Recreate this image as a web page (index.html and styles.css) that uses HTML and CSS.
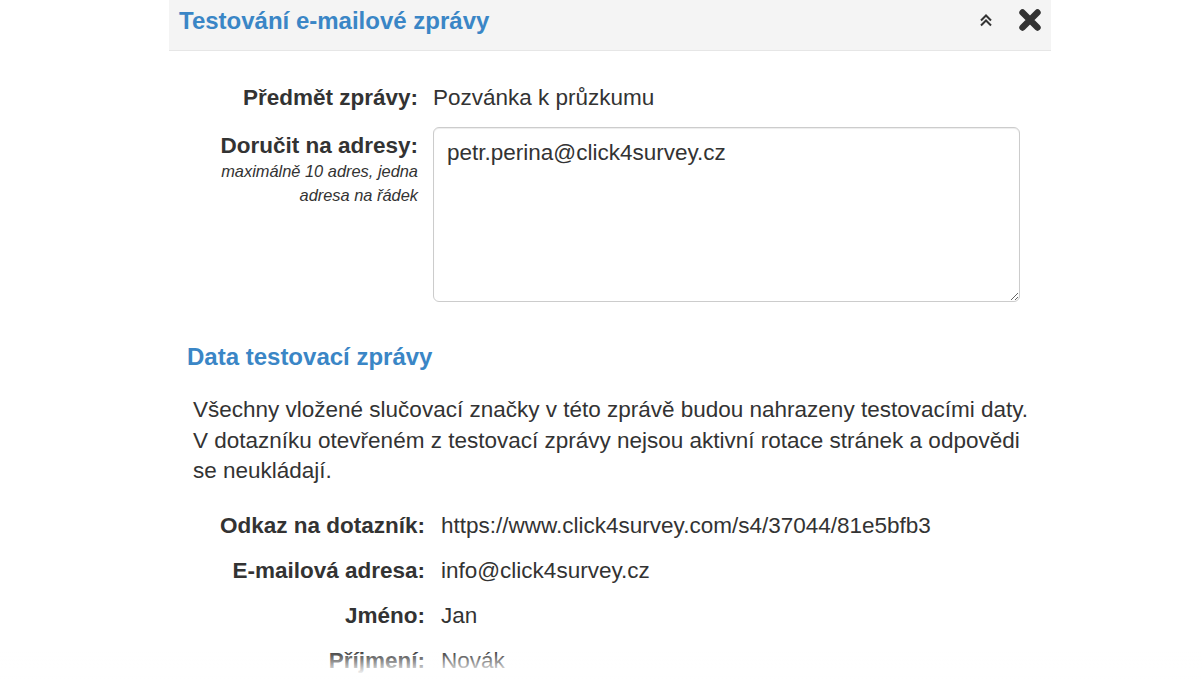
FILE: index.html
```html
<!DOCTYPE html>
<html lang="cs">
<head>
<meta charset="utf-8">
<title>Testování e-mailové zprávy</title>
<link rel="stylesheet" href="styles.css">
</head>
<body>
<div class="panel">
  <div class="panel-head">
    <h2 class="panel-title">Testování e-mailové zprávy</h2>
    <div class="panel-tools">
      <svg class="ico-collapse" width="14" height="14" viewBox="0 0 14 14"><path d="M2 7.5 L7 2.5 L12 7.5 M2 12.5 L7 7.5 L12 12.5" fill="none" stroke="#333" stroke-width="2"/></svg>
      <svg class="ico-close" width="24" height="24" viewBox="0 0 24 24"><path d="M4.5 4.5 L19.5 19.5 M19.5 4.5 L4.5 19.5" fill="none" stroke="#333" stroke-width="6.4" stroke-linecap="round"/></svg>
    </div>
  </div>

  <div class="form">
    <div class="row">
      <div class="label">Předmět zprávy:</div>
      <div class="value">Pozvánka k průzkumu</div>
    </div>
    <div class="row row-area">
      <div class="label label-area">
        <div>Doručit na adresy:</div>
        <div class="hint">maximálně 10 adres, jedna adresa na řádek</div>
      </div>
      <div class="value"><textarea class="area">petr.perina@click4survey.cz</textarea></div>
    </div>
  </div>

  <div class="section">
    <h3 class="section-title">Data testovací zprávy</h3>
    <p class="note">Všechny vložené slučovací značky v této zprávě budou nahrazeny testovacími daty. V dotazníku otevřeném z testovací zprávy nejsou aktivní rotace stránek a odpovědi se neukládají.</p>
    <div class="data">
      <div class="drow"><div class="label">Odkaz na dotazník:</div><div class="value">https://www.click4survey.com/s4/37044/81e5bfb3</div></div>
      <div class="drow"><div class="label">E-mailová adresa:</div><div class="value">info@click4survey.cz</div></div>
      <div class="drow"><div class="label">Jméno:</div><div class="value">Jan</div></div>
      <div class="drow"><div class="label">Příjmení:</div><div class="value">Novák</div></div>
    </div>
  </div>
</div>
<div class="fade"></div>
</body>
</html>
```

FILE: styles.css
```css
html, body {
  margin: 0;
  padding: 0;
  background: #fff;
  overflow: hidden;
}
body {
  font-family: "Liberation Sans", Arial, sans-serif;
  font-size: 22.5px;
  line-height: 30px;
  color: #333;
}
.panel {
  width: 882px;
  margin-left: 169px;
}
.panel-head {
  height: 50px;
  background: #f4f4f4;
  border-bottom: 1px solid #e6e6e6;
  display: flex;
  align-items: flex-start;
  justify-content: space-between;
  padding: 0 9px 0 10px;
}
.panel-title {
  margin: 6px 0 0 0;
  font-size: 24px;
  line-height: 30px;
  font-weight: bold;
  color: #3a86c6;
}
.panel-tools {
  display: flex;
  align-items: center;
  gap: 25px;
  margin-top: 8px;
}
.ico-collapse {
  display: block;
  margin-left: -1px;
}
.ico-close {
  display: block;
}
.form {
  padding: 32px 31px 0 0;
}
.row {
  display: grid;
  grid-template-columns: 249px 1fr;
  column-gap: 15px;
}
.row-area {
  margin-top: 14px;
}
.label {
  text-align: right;
  font-weight: bold;
}
.label-area {
  padding-top: 4px;
}
.hint {
  font-weight: normal;
  font-style: italic;
  font-size: 16.4px;
  line-height: 24px;
  margin-top: -2px;
  padding-left: 45px;
}
.area {
  display: block;
  box-sizing: border-box;
  width: 100%;
  height: 175px;
  margin: 0;
  padding: 10px 13px;
  border: 1px solid #ccc;
  border-radius: 6px;
  box-shadow: inset 0 1px 1px rgba(0,0,0,0.075);
  font-family: "Liberation Sans", Arial, sans-serif;
  font-size: 22.5px;
  line-height: 30px;
  color: #333;
  resize: vertical;
  background: #fff;
}
.section {
  padding: 40px 15px 0 18px;
}
.section-title {
  margin: 0;
  font-size: 24px;
  line-height: 30px;
  font-weight: bold;
  color: #3a86c6;
}
.note {
  margin: 23px 0 0 6px;
  line-height: 30.5px;
}
.data {
  margin-top: 24px;
  margin-left: -18px;
  display: flex;
  flex-direction: column;
  gap: 15px;
}
.drow {
  display: grid;
  grid-template-columns: 256px 1fr;
  column-gap: 16px;
}
.fade {
  position: fixed;
  left: 0;
  right: 0;
  bottom: 0;
  height: 32px;
  background: linear-gradient(to bottom, rgba(255,255,255,0) 0%, rgba(255,255,255,0.45) 35%, rgba(255,255,255,0.9) 70%, #fff 100%);
  pointer-events: none;
}
```
